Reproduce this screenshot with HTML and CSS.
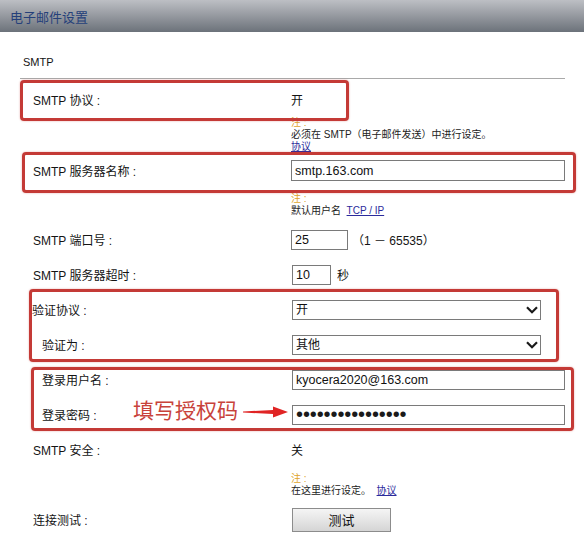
FILE: index.html
```html
<!DOCTYPE html>
<html lang="zh-CN">
<head>
<meta charset="utf-8">
<title>电子邮件设置</title>
<link rel="stylesheet" href="styles.css">
</head>
<body>
<div class="page">
  <header class="topbar"><h1 class="topbar-title">电子邮件设置</h1></header>
  <main class="content">
    <div class="section-title">SMTP</div>

    <div class="row row-first"><span class="label">SMTP 协议 :</span><span class="value">开</span></div>
    <div class="note">
      <div class="note-head">注 :</div>
      <div>必须在 SMTP（电子邮件发送）中进行设定。</div>
      <div><a class="link" href="#">协议</a></div>
    </div>

    <div class="row"><span class="label">SMTP 服务器名称 :</span><input class="field field-wide" type="text" value="smtp.163.com"></div>
    <div class="note note-gap">
      <div class="note-head">注 :</div>
      <div>默认用户名 &nbsp;<a class="link" href="#">TCP / IP</a></div>
    </div>

    <div class="row row-gap"><span class="label">SMTP 端口号 :</span><input class="field field-port" type="text" value="25"><span class="unit unit-range">（1 － 65535）</span></div>
    <div class="row"><span class="label">SMTP 服务器超时 :</span><input class="field field-time" type="text" value="10"><span class="unit unit-sec">秒</span></div>

    <div class="row"><span class="label label-out">验证协议 :</span>
      <span class="select-wrap"><select class="select"><option>开</option></select>
        <svg class="chev" viewBox="0 0 12 8" width="12" height="8"><path d="M1 1.2 L6 6.2 L11 1.2" fill="none" stroke="#1a1a1a" stroke-width="2.2"/></svg></span>
    </div>
    <div class="row"><span class="label label-indent">验证为 :</span>
      <span class="select-wrap"><select class="select"><option>其他</option></select>
        <svg class="chev" viewBox="0 0 12 8" width="12" height="8"><path d="M1 1.2 L6 6.2 L11 1.2" fill="none" stroke="#1a1a1a" stroke-width="2.2"/></svg></span>
    </div>

    <div class="row"><span class="label label-indent">登录用户名 :</span><input class="field field-login" type="text" value="kyocera2020@163.com"></div>
    <div class="row"><span class="label label-indent">登录密码 :</span><input class="field field-login field-pass" type="password" value="abcdefghijklmnop"></div>

    <div class="row"><span class="label">SMTP 安全 :</span><span class="value">关</span></div>
    <div class="note note-gap-s">
      <div class="note-head">注 :</div>
      <div>在这里进行设定。 &nbsp;<a class="link" href="#">协议</a></div>
    </div>

    <div class="row row-gap"><span class="label">连接测试 :</span><button class="btn" type="button">测试</button></div>
  </main>

  <div class="mark mark-1"></div>
  <div class="mark mark-2"></div>
  <div class="mark mark-3"></div>
  <div class="mark mark-4"></div>
  <div class="callout">填写授权码</div>
  <svg class="arrow" viewBox="0 0 46 12" width="46" height="12"><polygon points="0,5.4 30,4 30,0.5 45,6 30,11.5 30,8 0,6.6" fill="#e02424"/></svg>
</div>
</body>
</html>
```

FILE: styles.css
```css
html, body {
  margin: 0;
  padding: 0;
  background: #ffffff;
}
body {
  font-family: "Liberation Sans", "Noto Sans CJK SC", sans-serif;
  font-size: 12px;
  color: #141414;
}
.page {
  position: relative;
  width: 584px;
  height: 540px;
  overflow: hidden;
}
.topbar {
  height: 32px;
  box-sizing: border-box;
  padding-left: 10px;
  display: flex;
  align-items: center;
  background: linear-gradient(#bdbfc4, #6c727a);
}
.topbar-title {
  margin: 0;
  font-size: 13px;
  font-weight: normal;
  color: #25407a;
  font-family: "Noto Sans CJK SC", sans-serif;
}
.content {
  margin-left: 20px;
  width: 545px;
}
.section-title {
  height: 47px;
  box-sizing: border-box;
  padding: 23px 0 0 3px;
  line-height: 14px;
  font-size: 11px;
  border-bottom: 1px solid #a9a9a9;
}
.row {
  display: flex;
  align-items: center;
  height: 35px;
  padding-left: 13px;
}
.row-first { margin-top: 3px; }
.row-gap { margin-top: 5px; }
.label {
  flex: none;
  width: 258px;
  box-sizing: border-box;
  white-space: nowrap;
}
.label-indent { padding-left: 9px; }
.label-out { margin-left: -1px; width: 259px; }
.value { font-size: 12px; }
.note {
  padding-left: 271px;
  font-size: 10px;
  line-height: 12px;
  color: #222;
}
.note-gap { margin-top: 5px; }
.note-gap-s { margin-top: 6px; }
.note-head { color: #e0a52c; }
.link {
  color: #2b2b9c;
  text-decoration: underline;
}
.field {
  height: 21px;
  box-sizing: border-box;
  border: 1px solid #7a7a7a;
  border-radius: 0;
  padding: 0 3px;
  margin: 0;
  font-family: "Liberation Sans", sans-serif;
  font-size: 12.5px;
  color: #111;
  background: #fff;
  outline: none;
}
.field-wide { width: 274px; }
.field-port { width: 57px; height: 20px; }
.field-time { width: 39px; height: 20px; margin-left: 1px; }
.field-login { width: 273px; height: 20px; margin-left: 1px; }
.field-pass {
  font-size: 20px;
  letter-spacing: -0.1px;
  padding: 0 0 0 3px;
  line-height: 18px;
  color: #1a1a1a;
}
.unit { font-size: 12px; }
.unit-range { margin-left: 4px; }
.unit-sec { margin-left: 6px; }
.select-wrap {
  position: relative;
  display: inline-block;
  margin-left: 1px;
}
.select {
  display: block;
  width: 249px;
  height: 20px;
  box-sizing: border-box;
  border: 1px solid #7a7a7a;
  border-radius: 0;
  padding: 0 3px;
  margin: 0;
  font-family: "Liberation Sans", "Noto Sans CJK SC", sans-serif;
  font-size: 12px;
  color: #111;
  background: #fff;
  -webkit-appearance: none;
  appearance: none;
}
.chev {
  position: absolute;
  right: 3px;
  top: 6px;
  pointer-events: none;
}
.btn {
  width: 99px;
  height: 24px;
  margin: 0 0 0 1px;
  padding: 0;
  border: 1px solid #8c8c8c;
  border-radius: 0;
  background: linear-gradient(#f5f5f5, #d5d5d5);
  font-family: "Noto Sans CJK SC", sans-serif;
  font-size: 13px;
  color: #111;
}
.mark {
  position: absolute;
  box-sizing: border-box;
  border: 3px solid #c43a36;
  border-radius: 4px;
  box-shadow: 0 0 2px rgba(196, 58, 54, 0.45);
}
.mark-1 { left: 20px; top: 80px; width: 329px; height: 41px; }
.mark-2 { left: 22px; top: 152px; width: 554px; height: 41px; }
.mark-3 { left: 29px; top: 289px; width: 530px; height: 73px; }
.mark-4 { left: 31px; top: 367px; width: 543px; height: 64px; }
.callout {
  position: absolute;
  left: 133px;
  top: 396px;
  font-family: "Noto Sans CJK SC", sans-serif;
  font-size: 21px;
  line-height: 26px;
  color: #c8423a;
  white-space: nowrap;
}
.arrow {
  position: absolute;
  left: 243px;
  top: 406px;
}
```
